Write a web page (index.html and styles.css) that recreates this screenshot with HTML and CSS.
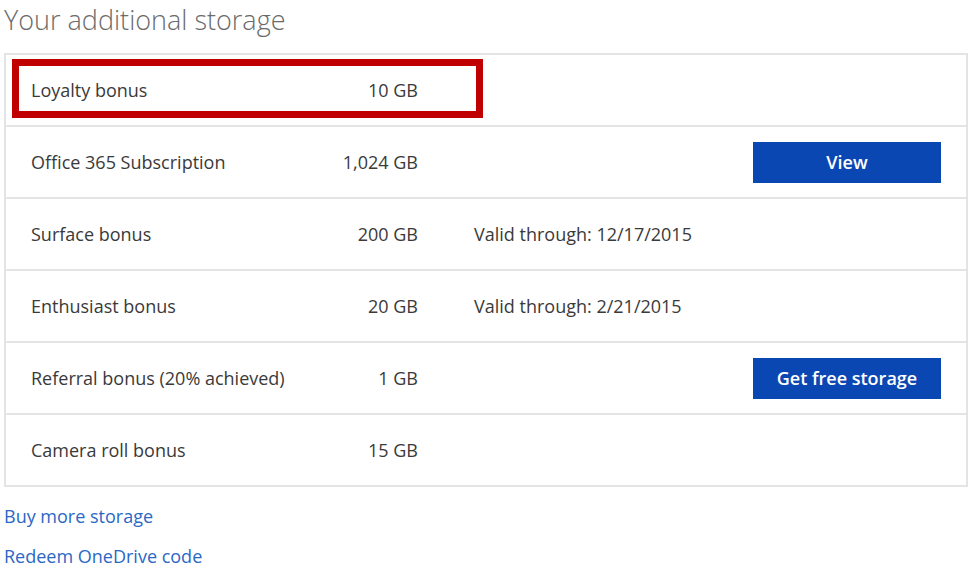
FILE: index.html
```html
<!DOCTYPE html>
<html lang="en">
<head>
    <meta charset="UTF-8">
    <meta name="viewport" content="width=device-width, initial-scale=1.0">
    <title>Your additional storage</title>
    <link rel="stylesheet" href="styles.css">
</head>
<body>
    <h1 class="title">Your additional storage</h1>

    <!-- Storage table -->
    <div class="storage">
        <div class="row highlighted">
            <span class="name">Loyalty bonus</span>
            <span class="amount">10 GB</span>
            <span class="note"></span>
            <span class="action"></span>
            <div class="marker"></div>
        </div>
        <div class="row">
            <span class="name">Office 365 Subscription</span>
            <span class="amount">1,024 GB</span>
            <span class="note"></span>
            <span class="action"><button class="btn">View</button></span>
        </div>
        <div class="row">
            <span class="name">Surface bonus</span>
            <span class="amount">200 GB</span>
            <span class="note">Valid through: 12/17/2015</span>
            <span class="action"></span>
        </div>
        <div class="row">
            <span class="name">Enthusiast bonus</span>
            <span class="amount">20 GB</span>
            <span class="note">Valid through: 2/21/2015</span>
            <span class="action"></span>
        </div>
        <div class="row">
            <span class="name">Referral bonus (20% achieved)</span>
            <span class="amount">1 GB</span>
            <span class="note"></span>
            <span class="action"><button class="btn">Get free storage</button></span>
        </div>
        <div class="row">
            <span class="name">Camera roll bonus</span>
            <span class="amount">15 GB</span>
            <span class="note"></span>
            <span class="action"></span>
        </div>
    </div>

    <!-- Links -->
    <div class="links">
        <a href="#" class="link">Buy more storage</a>
        <a href="#" class="link">Redeem OneDrive code</a>
    </div>
</body>
</html>
```

FILE: styles.css
```css
body {
    font-family: 'Open Sans', 'Noto Sans', sans-serif;
    background-color: #fff;
    color: #3a3a3a;
    margin: 0;
    padding: 0 3px 0 4px;
}

.title {
    font-size: 27px;
    font-weight: 300;
    color: #6b6b6b;
    line-height: 36px;
    margin: 2px 0 15px;
}

.storage {
    border: 2px solid #e4e4e4;
    border-bottom: none;
}

.row {
    display: grid;
    grid-template-columns: 300px 87px 1fr 188px;
    align-items: center;
    height: 70px;
    padding: 0 25px;
    border-bottom: 2px solid #e4e4e4;
    font-size: 18px;
}

.highlighted {
    position: relative;
}

.marker {
    position: absolute;
    left: 6px;
    top: 4px;
    width: 471px;
    height: 59px;
    border: 7px solid #c00000;
    box-sizing: border-box;
}

.amount {
    text-align: right;
}

.note {
    padding-left: 56px;
}

.btn {
    display: block;
    width: 188px;
    height: 41px;
    background-color: #0b47b3;
    color: #fff;
    border: none;
    font-family: inherit;
    font-size: 18px;
    font-weight: 600;
    cursor: pointer;
}

.links {
    display: flex;
    flex-direction: column;
    gap: 15px;
    padding-top: 17px;
}

.link {
    color: #2a68c5;
    text-decoration: none;
    font-size: 18px;
    line-height: 25px;
}
```
